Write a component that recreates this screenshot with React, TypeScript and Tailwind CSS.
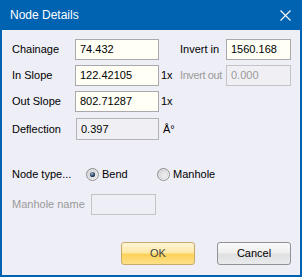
import React from "react";

const font = { fontFamily: '"Liberation Sans", Arial, sans-serif' };

function Field({ value, w, disabled, gray }: { value: string; w: string; disabled?: boolean; gray?: boolean }) {
  return (
    <div
      className={`${w} h-[21px] flex items-center pl-[4px] text-[11px] border ${
        disabled
          ? "bg-[#f0f0f4] border-[#c4c4c8] text-[#9a9a9a]"
          : gray
          ? "bg-[#f0f0f4] border-[#b4b4b8] text-black"
          : "bg-[#fffff6] border-[#a9a9ad] text-black"
      }`}
    >
      {value}
    </div>
  );
}

function Radio({ checked }: { checked?: boolean }) {
  return (
    <svg width="13" height="13" viewBox="0 0 13 13">
      <defs>
        <linearGradient id="rg" x1="0" y1="0" x2="1" y2="1">
          <stop offset="0" stopColor="#d0d0d0" />
          <stop offset="1" stopColor="#ffffff" />
        </linearGradient>
        <radialGradient id="dot" cx="0.4" cy="0.35" r="0.7">
          <stop offset="0" stopColor="#9fb3c8" />
          <stop offset="0.6" stopColor="#33506e" />
          <stop offset="1" stopColor="#1d3550" />
        </radialGradient>
      </defs>
      <circle cx="6.5" cy="6.5" r="6" fill="url(#rg)" stroke="#8c8f94" strokeWidth="1" />
      <circle cx="6.5" cy="6.5" r="4" fill="none" stroke="#d8d8da" strokeWidth="1" />
      {checked && <circle cx="6.5" cy="6.5" r="2.6" fill="url(#dot)" />}
    </svg>
  );
}

export default function App() {
  return (
    <div className="w-[302px] h-[277px] bg-[#0063b1] flex flex-col px-[2px] pb-[2px]" style={font}>
      <div className="h-[30px] flex items-center justify-between pl-[8px] pr-[9px] text-white text-[12px]">
        <span>Node Details</span>
        <svg width="11" height="11" viewBox="0 0 11 11">
          <path d="M0.5 0.5 L10.5 10.5 M10.5 0.5 L0.5 10.5" stroke="#ffffff" strokeWidth="1.1" />
        </svg>
      </div>
      <div className="flex-1 bg-[#eeeef6] flex flex-col pl-[10px] pr-[9px] pt-[9px] text-[11px] text-black">
        <div className="flex items-center h-[21px]">
          <div className="w-[63px]">Chainage</div>
          <Field value="74.432" w="w-[84px]" />
          <div className="w-[21px]" />
          <div className="w-[46px]">Invert in</div>
          <Field value="1560.168" w="w-[65px]" />
        </div>
        <div className="flex items-center h-[21px] mt-[5px]">
          <div className="w-[63px]">In Slope</div>
          <Field value="122.42105" w="w-[84px]" />
          <div className="w-[21px] pl-[2px]">1x</div>
          <div className="w-[46px] text-[#9a9a9a] whitespace-nowrap tracking-[-0.4px]">Invert out</div>
          <Field value="0.000" w="w-[65px]" disabled />
        </div>
        <div className="flex items-center h-[21px] mt-[5px]">
          <div className="w-[63px]">Out Slope</div>
          <Field value="802.71287" w="w-[84px]" />
          <div className="w-[21px] pl-[2px]">1x</div>
        </div>
        <div className="flex items-center h-[22px] mt-[6px]">
          <div className="w-[64px]">Deflection</div>
          <Field value="0.397" w="w-[83px] h-[22px]" gray />
          <div className="pl-[4px]">Å°</div>
        </div>
        <div className="flex items-center h-[21px] mt-[24px]">
          <div className="w-[74px]">Node type...</div>
          <div className="w-[71px] flex items-center gap-[3px]">
            <Radio checked />
            <span>Bend</span>
          </div>
          <div className="flex items-center gap-[3px]">
            <Radio />
            <span>Manhole</span>
          </div>
        </div>
        <div className="flex items-center h-[21px] mt-[9px]">
          <div className="w-[79px] text-[#9a9a9a]">Manhole name</div>
          <div className="w-[65px] h-[21px] border border-[#c4c4c8] bg-[#eeeef6]" />
        </div>
        <div className="flex justify-end gap-[22px] mt-[27px]">
          <button className="w-[74px] h-[23px] rounded-[3px] border border-[#c9a96a] bg-[linear-gradient(to_bottom,#fff5d6_0%,#fde9a8_45%,#fbd257_55%,#fde08a_100%)] text-[11px] text-[#444]">
            OK
          </button>
          <button className="w-[74px] h-[23px] rounded-[3px] border border-[#8f9296] bg-[linear-gradient(to_bottom,#fafafa_0%,#efefef_45%,#dfe0e2_55%,#e9eaec_100%)] text-[11px] text-black">
            Cancel
          </button>
        </div>
      </div>
    </div>
  );
}
